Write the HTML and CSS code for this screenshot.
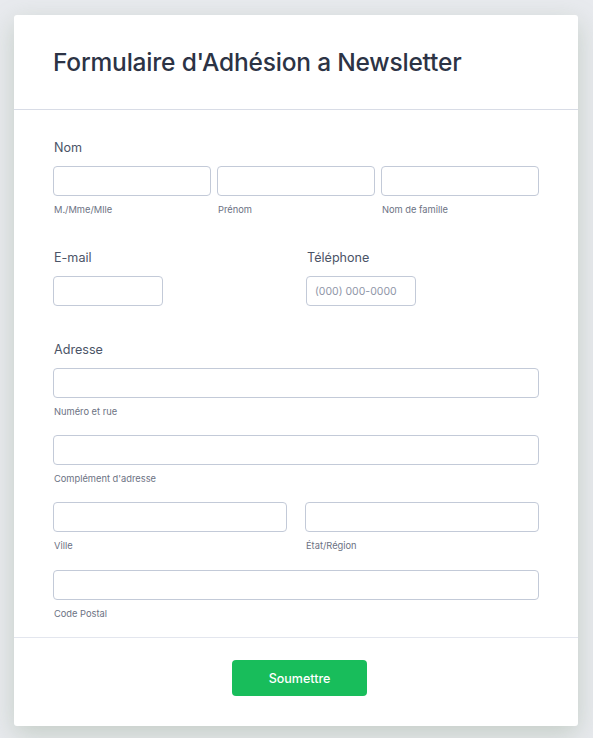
FILE: index.html
```html
<!DOCTYPE html>
<html lang="fr">
<head>
  <meta charset="UTF-8">
  <title>Formulaire d'Adhésion a Newsletter</title>
  <link rel="stylesheet" href="styles.css">
</head>
<body>
  <form class="form-card">
    <!-- En-tête du formulaire -->
    <div class="form-header">
      <h1>Formulaire d'Adhésion a Newsletter</h1>
    </div>

    <div class="form-body">
      <!-- Nom complet -->
      <div class="field field-name">
        <label class="field-label">Nom</label>
        <div class="row row-3">
          <div class="sub">
            <input type="text">
            <span class="sublabel">M./Mme/Mlle</span>
          </div>
          <div class="sub">
            <input type="text">
            <span class="sublabel">Prénom</span>
          </div>
          <div class="sub">
            <input type="text">
            <span class="sublabel">Nom de famille</span>
          </div>
        </div>
      </div>

      <!-- Contact -->
      <div class="row row-contact field-contact">
        <div class="field">
          <label class="field-label">E-mail</label>
          <input type="email" class="short">
        </div>
        <div class="field">
          <label class="field-label">Téléphone</label>
          <input type="tel" class="short" placeholder="(000) 000-0000">
        </div>
      </div>

      <!-- Adresse -->
      <div class="field field-address">
        <label class="field-label">Adresse</label>
        <div class="sub">
          <input type="text">
          <span class="sublabel">Numéro et rue</span>
        </div>
        <div class="sub">
          <input type="text">
          <span class="sublabel">Complément d'adresse</span>
        </div>
        <div class="row row-2">
          <div class="sub">
            <input type="text">
            <span class="sublabel">Ville</span>
          </div>
          <div class="sub">
            <input type="text">
            <span class="sublabel">État/Région</span>
          </div>
        </div>
        <div class="sub">
          <input type="text">
          <span class="sublabel">Code Postal</span>
        </div>
      </div>
    </div>

    <!-- Bouton d'envoi -->
    <div class="form-footer">
      <button type="button" class="submit-btn">Soumettre</button>
    </div>
  </form>
</body>
</html>
```

FILE: styles.css
```css
/* Base */
* { box-sizing: border-box; }
html, body {
  margin: 0;
  padding: 0;
}
body {
  background: #e8eaee;
  font-family: Inter, "Noto Sans", Arial, sans-serif;
  color: #2c3345;
  padding: 15px 0 12px;
}

/* Carte du formulaire */
.form-card {
  width: 564px;
  margin: 0 0 0 14px;
  background: #fff;
  border-radius: 3px;
  box-shadow: 0 8px 26px rgba(120, 145, 115, 0.32);
}

.form-header {
  padding: 31px 39px 31px;
  border-bottom: 1px solid #d8dce6;
}
.form-header h1 {
  margin: 0;
  font-size: 24.5px;
  line-height: 32px;
  font-weight: 500;
  letter-spacing: -0.2px;
  color: #2c3345;
}

.form-body {
  padding: 28px 39px 16px;
}

/* Champs */
.field-label {
  display: block;
  padding-left: 1px;
  font-size: 12.6px;
  line-height: 20px;
  color: #4b5467;
  margin-bottom: 8px;
}
input {
  display: block;
  width: 100%;
  height: 30px;
  border: 1px solid #c3cad8;
  border-radius: 4px;
  background: #fff;
  padding: 0 8px;
  font-family: inherit;
  font-size: 10.5px;
  color: #2c3345;
}
input::placeholder { color: #8f96a8; }
input.short { width: 110px; }

.sublabel {
  display: block;
  margin-top: 7px;
  padding-left: 1px;
  font-size: 9.3px;
  line-height: 14px;
  color: #6c7283;
}

.row { display: grid; }
.row-3 { grid-template-columns: repeat(3, 1fr); gap: 6px; }
.row-2 { grid-template-columns: 1fr 1fr; gap: 18px; }
.row-contact { grid-template-columns: 1fr 1fr; gap: 20px; }

.field-name { margin-bottom: 31px; }
.field-contact { margin-bottom: 34px; }
.field-address .sub { margin-bottom: 16px; }
.field-address .row .sub { margin-bottom: 0; }
.field-address .row { margin-bottom: 17px; }
.field-address > .sub:last-child { margin-bottom: 0; }

/* Pied */
.form-footer {
  border-top: 1px solid #e3e6ee;
  padding: 22px 0 30px;
  text-align: center;
}
.submit-btn {
  width: 135px;
  height: 36px;
  margin-left: 7px;
  border: 0;
  border-radius: 4px;
  background: #18bd5b;
  color: #fff;
  font-family: inherit;
  font-size: 12.5px;
  font-weight: 500;
  cursor: pointer;
}
```
